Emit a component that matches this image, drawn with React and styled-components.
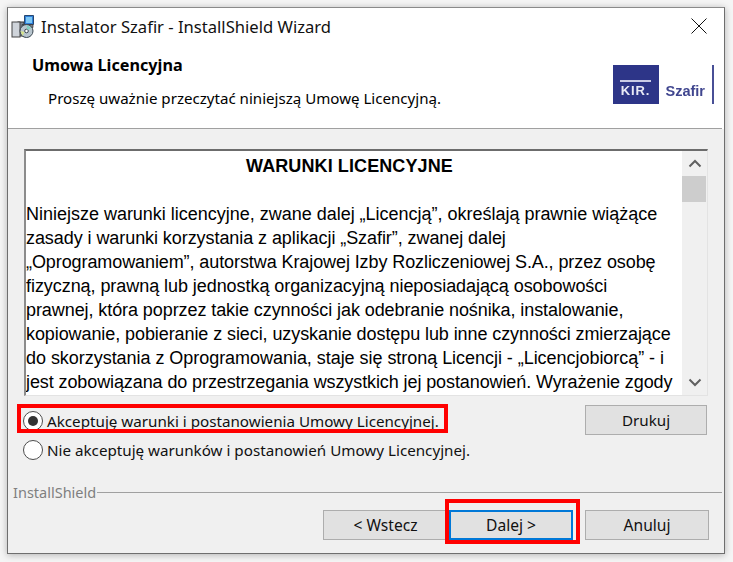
import React from "react";
import styled, { createGlobalStyle } from "styled-components";

const Global = createGlobalStyle`
  html, body { margin: 0; padding: 0; background: #f4f4f4; }
  #root { width: 733px; height: 562px; overflow: hidden; }
`;
const Page = styled.div`
  width: 733px; height: 562px; padding: 7px 8px 8px 7px; box-sizing: border-box;
  background: #f5f5f5;
`;
const Win = styled.div`
  width: 718px; height: 547px; box-sizing: border-box; border: 1px solid #6e6e6e;
  border-top-color: #8a8a8a; background: #f0f0f0;
  box-shadow: 0 1px 7px rgba(0,0,0,.28);
  display: flex; flex-direction: column;
  font-family: "Noto Sans", sans-serif; color: #000;
`;
const Top = styled.div`
  background: #fff; flex: none;
`;
const TitleBar = styled.div`
  height: 36px; display: flex; align-items: center; padding: 0 0 0 3px;
`;
const TitleText = styled.div`
  font-size: 16.6px; margin-left: 6px; color: #111; flex: 1;
`;
const Close = styled.div`
  width: 46px; height: 36px; display: flex; align-items: center; justify-content: center; margin: -1px 2px 0 0;
`;
const Header = styled.div`
  height: 84px; display: flex; justify-content: space-between;
`;
const HeaderRule = styled.div`
  height: 1px; background: #a0a0a0; margin-right: 2px;
`;
const HeadText = styled.div`
  padding: 11px 0 0 24px;
`;
const HeadTitle = styled.div`
  font-weight: 700; font-size: 16.2px; line-height: 20px;
`;
const HeadSub = styled.div`
  font-size: 15.1px; line-height: 20px; margin: 13px 0 0 16px;
`;
const Logo = styled.div`
  display: flex; align-items: flex-end; padding: 21px 10px 0 0; height: 39px; filter: blur(.4px);
`;
const LogoBox = styled.div`
  width: 46px; height: 39px; background: #2d3588; color: #e8e9f5; font: 700 13px/12px "Liberation Sans", sans-serif;
  letter-spacing: .9px; display: flex; flex-direction: column; align-items: center; justify-content: flex-end;
  padding-bottom: 7px; box-sizing: border-box;
`;
const LogoRule = styled.div`
  width: 31px; height: 2px; background: #c9cbe6; margin-bottom: 3px;
`;
const LogoText = styled.div`
  font: 700 14.5px/14px "Liberation Sans", sans-serif; color: #40468f; margin: 0 7px 6px 7px;
`;
const LogoBar = styled.div`
  width: 2px; height: 39px; background: #484f96;
`;
const Body = styled.div`
  flex: 1; padding: 20px 16px 0 16px; display: flex; flex-direction: column; position: relative; min-height: 0;
`;
const LicenseBox = styled.div`
  width: 684px; height: 247px; box-sizing: border-box; background: #fff; flex: none;
  border-top: 2px solid #6c6c6c; border-left: 2px solid #8c8c8c; border-right: 1px solid #e3e3e3; border-bottom: 1px solid #e3e3e3;
  display: flex; overflow: hidden;
`;
const LicenseText = styled.div`
  flex: 1; padding: 3px 0 0 0; font: 18px/24px "Liberation Sans", Arial, sans-serif; color: #000; white-space: nowrap; overflow: hidden;
`;
const LicenseTitle = styled.div`
  font-weight: 700; text-align: center; margin-bottom: 24px; padding-right: 9px; letter-spacing: .1px;
`;
const LicenseLine = styled.div`
  letter-spacing: ${p => p.$spacing}px;
`;
const Scroll = styled.div`
  width: 25px; background: #f0f0f0; display: flex; flex-direction: column; align-items: center; flex: none;
`;
const ScrollBtn = styled.div`
  height: 25px; width: 100%; display: flex; align-items: center; justify-content: center; flex: none;
`;
const Thumb = styled.div`
  width: 24px; height: 26px; background: #cdcdcd; flex: none; margin-right: 1px;
`;
const Spacer = styled.div`flex: 1;`;
const Options = styled.div`
  margin-top: 10px; display: flex; flex-direction: column; position: relative;
`;
const OptionRow = styled.div`
  display: flex; align-items: center; height: 29px; margin-left: -1px;
`;
const Radio = styled.div`
  width: 20px; height: 20px; border-radius: 50%; border: 1px solid #4d4d4d; background: #fff; box-sizing: border-box;
  display: flex; align-items: center; justify-content: center; flex: none;
`;
const Dot = styled.div`
  width: 10px; height: 10px; border-radius: 50%; background: #333;
`;
const OptionLabel = styled.div`
  font-size: 15.2px; margin-left: 4px; color: #111;
`;
const Highlight = styled.div`
  position: absolute; border: 4px solid #f00; box-sizing: border-box; pointer-events: none;
  left: ${p => p.$x}px; top: ${p => p.$y}px; width: ${p => p.$w}px; height: ${p => p.$h}px;
`;
const WinBtn = styled.div`
  height: 30px; box-sizing: border-box; border: 1px solid #adadad; background: #e1e1e1;
  font-size: 15.6px; color: #111; display: flex; align-items: center; justify-content: center;
  width: ${p => p.$w}px; flex: none; ${p => p.$focus ? "border: 2px solid #0078d7;" : ""}
`;
const PrintBtn = styled(WinBtn)`
  position: absolute; right: 1px; top: -1px; font-size: 15.2px;
`;
const ShieldRow = styled.div`
  display: flex; align-items: center; margin: 18px -14px 0 -11px; gap: 1px;
`;
const ShieldLabel = styled.div`
  font-size: 14.5px; color: #7f7f7f; line-height: 20px;
`;
const ShieldLine = styled.div`
  flex: 1; height: 1px; background: #a0a0a0;
`;
const Buttons = styled.div`
  display: flex; justify-content: flex-end; margin: 8px -1px 0 0; gap: 12px;
`;
const BackGroup = styled.div`
  display: flex; gap: 1px;
`;

function InstallerIcon() {
  return (
    <svg width="24" height="24" viewBox="0 0 24 24">
      <rect x="7" y="8" width="6" height="14" fill="#7d8794" stroke="#333" />
      <rect x="1" y="8" width="8" height="15" fill="#cfd4da" stroke="#444" />
      <path d="M13.5 1.5 h9 v9 h-9z" fill="#2f7fd8" stroke="#27476f" />
      <rect x="15" y="3" width="6" height="6" fill="#7ec8f5" />
      <path d="M11 10.5 h11 v3 h-11z" fill="#7d7f86" stroke="#333" strokeWidth=".7" />
      <circle cx="15.5" cy="17" r="6.5" fill="#b8c5ce" stroke="#39454f" />
      <circle cx="15.5" cy="17" r="1.8" fill="#fff" stroke="#39454f" />
      <path d="M15.5 11 l5 3 -4 2z" fill="#7fd0c0" />
      <path d="M9.5 17 l4 1 -2 4z" fill="#d6e48b" />
    </svg>
  );
}

const lines = [
  ["Niniejsze warunki licencyjne, zwane dalej „Licencją”, określają prawnie wiążące", -0.013],
  ["zasady i warunki korzystania z aplikacji „Szafir”, zwanej dalej", -0.07],
  ["„Oprogramowaniem”, autorstwa Krajowej Izby Rozliczeniowej S.A., przez osobę", -0.09],
  ["fizyczną, prawną lub jednostką organizacyjną nieposiadającą osobowości", -0.06],
  ["prawnej, która poprzez takie czynności jak odebranie nośnika, instalowanie,", -0.08],
  ["kopiowanie, pobieranie z sieci, uzyskanie dostępu lub inne czynności zmierzające", -0.085],
  ["do skorzystania z Oprogramowania, staje się stroną Licencji - „Licencjobiorcą” - i", -0.04],
  ["jest zobowiązana do przestrzegania wszystkich jej postanowień. Wyrażenie zgody", -0.1],
];

export default function App() {
  return (
    <Page>
      <Global />
      <Win>
        <Top>
          <TitleBar>
            <InstallerIcon />
            <TitleText>Instalator Szafir - InstallShield Wizard</TitleText>
            <Close>
              <svg width="16" height="16" viewBox="0 0 16 16"><path d="M.5.5l15 15M15.5.5l-15 15" stroke="#111" strokeWidth="1" fill="none" /></svg>
            </Close>
          </TitleBar>
          <Header>
            <HeadText>
              <HeadTitle>Umowa Licencyjna</HeadTitle>
              <HeadSub>Proszę uważnie przeczytać niniejszą Umowę Licencyjną.</HeadSub>
            </HeadText>
            <Logo>
              <LogoBox><LogoRule />KIR.</LogoBox>
              <LogoText>Szafir</LogoText>
              <LogoBar />
            </Logo>
          </Header>
          <HeaderRule />
        </Top>
        <Body>
          <LicenseBox>
            <LicenseText>
              <LicenseTitle>WARUNKI LICENCYJNE</LicenseTitle>
              {lines.map(([text, spacing]) => <LicenseLine key={text} $spacing={spacing}>{text}</LicenseLine>)}
            </LicenseText>
            <Scroll>
              <ScrollBtn>
                <svg width="14" height="9" viewBox="0 0 14 9"><path d="M1.5 7.5L7 2l5.5 5.5" stroke="#606060" strokeWidth="2" fill="none" /></svg>
              </ScrollBtn>
              <Thumb />
              <Spacer />
              <ScrollBtn>
                <svg width="14" height="9" viewBox="0 0 14 9"><path d="M1.5 1.5L7 7l5.5-5.5" stroke="#606060" strokeWidth="2" fill="none" /></svg>
              </ScrollBtn>
            </Scroll>
          </LicenseBox>
          <Options>
            <OptionRow><Radio><Dot /></Radio><OptionLabel>Akceptuję warunki i postanowienia Umowy Licencyjnej.</OptionLabel></OptionRow>
            <OptionRow><Radio /><OptionLabel>Nie akceptuję warunków i postanowień Umowy Licencyjnej.</OptionLabel></OptionRow>
            <PrintBtn $w={122}>Drukuj</PrintBtn>
          </Options>
          <ShieldRow><ShieldLabel>InstallShield</ShieldLabel><ShieldLine /></ShieldRow>
          <Buttons>
            <BackGroup>
              <WinBtn $w={125}>&lt; Wstecz</WinBtn>
              <WinBtn $w={124} $focus>Dalej &gt;</WinBtn>
            </BackGroup>
            <WinBtn $w={124}>Anuluj</WinBtn>
          </Buttons>
          <Highlight $x={9} $y={275} $w={431} $h={29} />
          <Highlight $x={437} $y={370} $w={135} $h={45} />
        </Body>
      </Win>
    </Page>
  );
}
